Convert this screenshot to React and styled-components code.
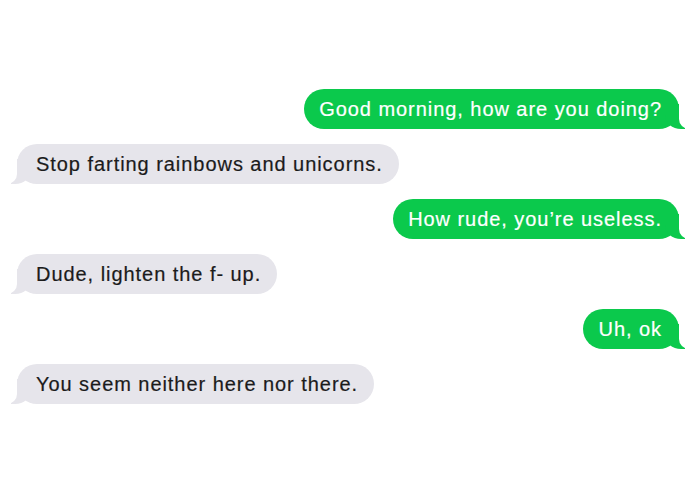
import React from "react"
import styled, { createGlobalStyle } from "styled-components"

const GlobalStyle = createGlobalStyle`
    body {
        margin: 0;
        background: #ffffff;
        font-family: "Liberation Sans", Arial, sans-serif;
    }
`

let Thread = styled.div`
    display: flex;
    flex-direction: column;
    gap: 15px;
    padding: 89px 16px 0 17px;
    box-sizing: border-box;
    width: 695px;
    height: 494px;
`

let Bubble = styled.div`
    position: relative;
    align-self: ${p => (p.$me ? "flex-end" : "flex-start")};
    background: ${p => (p.$me ? "#0bc94c" : "#e6e5eb")};
    color: ${p => (p.$me ? "#ffffff" : "#1b1b1b")};
    font-size: 20px;
    line-height: 24px;
    letter-spacing: 0.95px;
    -webkit-text-stroke: 0.2px currentColor;
    padding: ${p => (p.$me ? "8px 17px 8px 15px" : "8px 16px 8px 19px")};
    border-radius: 20px;

    &::before,
    &::after {
        content: "";
        position: absolute;
        bottom: 0;
        height: 25px;
    }

    &::before {
        width: 20px;
        background: ${p => (p.$me ? "#0bc94c" : "#e6e5eb")};
        ${p =>
            p.$me
                ? "right: -6px; border-bottom-left-radius: 16px 14px;"
                : "left: -6px; border-bottom-right-radius: 16px 14px;"}
    }

    &::after {
        width: 26px;
        background: #ffffff;
        ${p =>
            p.$me
                ? "right: -26px; border-bottom-left-radius: 10px;"
                : "left: -26px; border-bottom-right-radius: 10px;"}
    }
`

const messages = [
    { me: true, text: "Good morning, how are you doing?" },
    { me: false, text: "Stop farting rainbows and unicorns." },
    { me: true, text: "How rude, you\u2019re useless." },
    { me: false, text: "Dude, lighten the f- up." },
    { me: true, text: "Uh, ok" },
    { me: false, text: "You seem neither here nor there." },
]

export default function App() {
    return (
        <>
            <GlobalStyle />
            <Thread>
                {messages.map((m, i) => (
                    <Bubble key={i} $me={m.me}>
                        {m.text}
                    </Bubble>
                ))}
            </Thread>
        </>
    )
}
